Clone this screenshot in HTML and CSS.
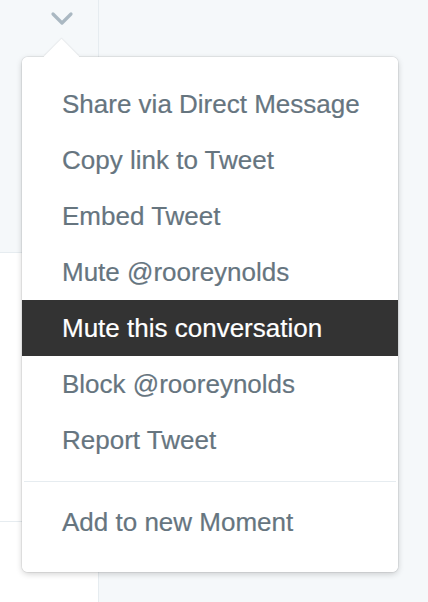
FILE: index.html
```html
<!DOCTYPE html>
<html>
<head>
<meta charset="utf-8">
<link rel="stylesheet" href="styles.css">
</head>
<body>
<div class="page">
  <div class="col">
    <div class="tweet tweet-hover">
      <svg class="chev" width="24" height="16" viewBox="0 0 24 16">
        <path d="M3 3 L12 12 L21 3" fill="none" stroke="#aab8c2" stroke-width="3.2" stroke-linecap="round" stroke-linejoin="round"/>
      </svg>
    </div>
    <div class="tweet tweet-mid"></div>
    <div class="tweet tweet-rest"></div>
  </div>
  <div class="side"></div>

  <div class="menu">
    <div class="caret"></div>
    <ul class="list">
      <li class="item">Share via Direct Message</li>
      <li class="item">Copy link to Tweet</li>
      <li class="item">Embed Tweet</li>
      <li class="item">Mute @rooreynolds</li>
      <li class="item active">Mute this conversation</li>
      <li class="item">Block @rooreynolds</li>
      <li class="item">Report Tweet</li>
      <li class="divider"></li>
      <li class="item">Add to new Moment</li>
    </ul>
  </div>
</div>
</body>
</html>
```

FILE: styles.css
```css
html, body {
  margin: 0;
  padding: 0;
  background: #f5f8fa;
  font-family: "Liberation Sans", Arial, Helvetica, sans-serif;
}

.page {
  position: relative;
  width: 428px;
  height: 602px;
  display: flex;
  overflow: hidden;
}

.col {
  width: 98px;
  border-right: 1px solid #e6ecf0;
  display: flex;
  flex-direction: column;
  background: #fff;
}

.tweet {
  border-bottom: 1px solid #e6ecf0;
}

.tweet-hover {
  height: 252px;
  background: #f5f8fa;
  position: relative;
}

.chev {
  position: absolute;
  left: 50px;
  top: 11px;
}

.tweet-mid {
  height: 268px;
  background: #fff;
}

.tweet-rest {
  flex: 1;
  border-bottom: none;
  background: #fff;
}

.side {
  flex: 1;
  background: #f5f8fa;
}

.menu {
  position: absolute;
  left: 22px;
  top: 57px;
  width: 376px;
  background: #fff;
  border-radius: 6px;
  box-shadow: 0 0 0 1px rgba(0, 0, 0, 0.06), 0 2px 6px rgba(0, 0, 0, 0.18);
}

.caret {
  position: absolute;
  left: 27px;
  top: -13px;
  width: 25px;
  height: 25px;
  background: #fff;
  transform: rotate(45deg);
  box-shadow: -1px -1px 1px rgba(0, 0, 0, 0.06);
  z-index: 0;
}

.list {
  position: relative;
  z-index: 1;
  list-style: none;
  margin: 0;
  padding: 19px 0 22px;
  background: #fff;
  border-radius: 6px;
}

.item {
  height: 56px;
  line-height: 56px;
  padding-left: 40px;
  font-size: 26px;
  color: #66757f;
  white-space: nowrap;
  -webkit-text-stroke: 0.2px currentColor;
}

.item.active {
  background: #333333;
  color: #fff;
}

.divider {
  height: 1px;
  background: #e6ecf0;
  margin: 13px 2px 12px;
}
```
